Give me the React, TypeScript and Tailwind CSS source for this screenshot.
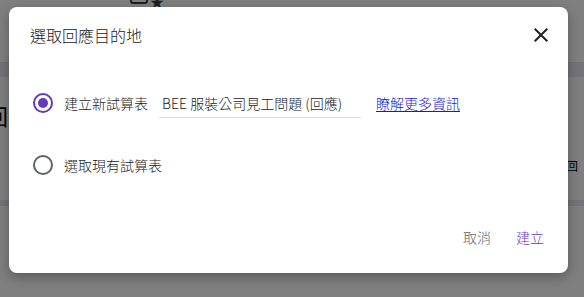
import { useState } from 'react'

const font = { fontFamily: '"Noto Sans CJK TC", "Noto Sans", Roboto, sans-serif' }

function Radio({ checked }: { checked: boolean }) {
  return (
    <span
      className={
        checked
          ? 'flex h-[20px] w-[20px] shrink-0 items-center justify-center rounded-full border-2 border-[#673ab7]'
          : 'flex h-[20px] w-[20px] shrink-0 items-center justify-center rounded-full border-2 border-[#5f6368]'
      }
    >
      {checked && <span className="h-[10px] w-[10px] rounded-full bg-[#673ab7]" />}
    </span>
  )
}

export default function App() {
  const [choice, setChoice] = useState<'new' | 'existing'>('new')
  const [name, setName] = useState('BEE 服裝公司見工問題 (回應)')

  return (
    <div className="relative h-[297px] w-[584px] overflow-hidden bg-white" style={font}>
      {/* page behind the scrim */}
      <div className="absolute left-[130px] top-[-12px] h-[16px] w-[18px] rounded-[3px] border-2 border-[#3c4043]" />
      <div className="absolute left-[150px] top-[-9px] text-[14px] text-[#3c4043]">★</div>
      <div className="absolute left-0 top-[62px] h-[15px] w-full bg-[#e8e8f0]" />
      <div className="absolute left-[-14px] top-[104px] text-[22px] leading-none text-black">回</div>
      <div className="absolute left-[566px] top-[160px] text-[12px] leading-none text-black">回</div>
      <div className="absolute left-0 top-[200px] h-[6px] w-full bg-[#e8e8f0]" />
      <div className="absolute inset-0 bg-black/50" />

      {/* dialog */}
      <div className="absolute left-[9px] top-[7px] flex h-[266px] w-[559px] flex-col rounded-[8px] bg-white shadow-[0_4px_12px_rgba(0,0,0,0.3)]">
        <div className="flex items-center justify-between pl-[21px] pr-[15px] pt-[16px]">
          <h2 className="text-[16px] font-light leading-[24px] text-[#202124]">選取回應目的地</h2>
          <button className="flex h-[24px] w-[24px] items-center justify-center text-[#202124]">
            <svg viewBox="0 0 24 24" width="24" height="24" fill="currentColor">
              <path d="M19 6.41 17.59 5 12 10.59 6.41 5 5 6.41 10.59 12 5 17.59 6.41 19 12 13.41 17.59 19 19 17.59 13.41 12z" />
            </svg>
          </button>
        </div>

        <div className="mt-[41px] flex flex-col gap-[32px] pl-[24px]">
          <label className="flex h-[30px] cursor-pointer items-center" onClick={() => setChoice('new')}>
            <Radio checked={choice === 'new'} />
            <span className="ml-[11px] text-[14px] font-light text-[#202124]">建立新試算表</span>
            <input
              value={name}
              onChange={(e) => setName(e.target.value)}
              className="ml-[11px] h-[30px] w-[202px] border-b border-[#dadce0] px-[3px] text-[14px] font-light text-[#202124] outline-none"
              style={font}
            />
            <a href="#" className="ml-[15px] text-[14px] font-light text-[#1a1ad0] underline underline-offset-2">
              瞭解更多資訊
            </a>
          </label>
          <label className="flex h-[30px] cursor-pointer items-center" onClick={() => setChoice('existing')}>
            <Radio checked={choice === 'existing'} />
            <span className="ml-[11px] text-[14px] font-light text-[#202124]">選取現有試算表</span>
          </label>
        </div>

        <div className="mt-auto flex items-center justify-end gap-[25px] pb-[26px] pr-[24px]">
          <button className="text-[14px] font-light leading-[20px] text-[#5f6368]">取消</button>
          <button className="text-[14px] font-light leading-[20px] text-[#673ab7]">建立</button>
        </div>
      </div>
    </div>
  )
}
